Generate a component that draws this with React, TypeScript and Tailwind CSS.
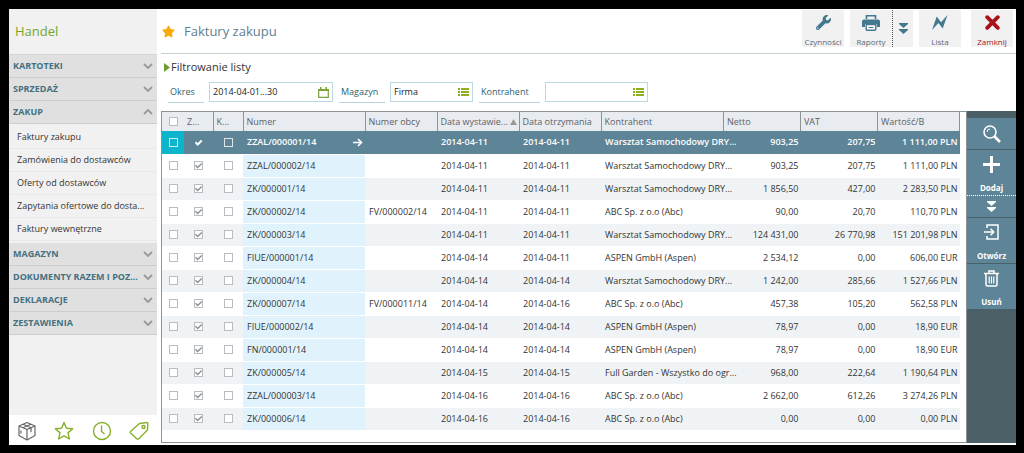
import { useState } from 'react'
import type { ReactNode } from 'react'
import clsx from 'clsx'
import { FaStar, FaWrench } from 'react-icons/fa'

interface Invoice {
  number: string
  foreign?: string
  issued: string
  received: string
  contractor: string
  net: string
  vat: string
  gross: string
}

const WORKSHOP = 'Warsztat Samochodowy DRY...'
const ABC = 'ABC Sp. z o.o (Abc)'
const ASPEN = 'ASPEN GmbH (Aspen)'

const invoices: Invoice[] = [
  { number: 'ZZAL/000001/14', issued: '2014-04-11', received: '2014-04-11', contractor: WORKSHOP, net: '903,25', vat: '207,75', gross: '1 111,00 PLN' },
  { number: 'ZZAL/000002/14', issued: '2014-04-11', received: '2014-04-11', contractor: WORKSHOP, net: '903,25', vat: '207,75', gross: '1 111,00 PLN' },
  { number: 'ZK/000001/14', issued: '2014-04-11', received: '2014-04-11', contractor: WORKSHOP, net: '1 856,50', vat: '427,00', gross: '2 283,50 PLN' },
  { number: 'ZK/000002/14', foreign: 'FV/000002/14', issued: '2014-04-11', received: '2014-04-11', contractor: ABC, net: '90,00', vat: '20,70', gross: '110,70 PLN' },
  { number: 'ZK/000003/14', issued: '2014-04-11', received: '2014-04-11', contractor: WORKSHOP, net: '124 431,00', vat: '26 770,98', gross: '151 201,98 PLN' },
  { number: 'FIUE/000001/14', issued: '2014-04-14', received: '2014-04-11', contractor: ASPEN, net: '2 534,12', vat: '0,00', gross: '606,00 EUR' },
  { number: 'ZK/000004/14', issued: '2014-04-14', received: '2014-04-14', contractor: WORKSHOP, net: '1 242,00', vat: '285,66', gross: '1 527,66 PLN' },
  { number: 'ZK/000007/14', foreign: 'FV/000011/14', issued: '2014-04-14', received: '2014-04-16', contractor: ABC, net: '457,38', vat: '105,20', gross: '562,58 PLN' },
  { number: 'FIUE/000002/14', issued: '2014-04-14', received: '2014-04-14', contractor: ASPEN, net: '78,97', vat: '0,00', gross: '18,90 EUR' },
  { number: 'FN/000001/14', issued: '2014-04-14', received: '2014-04-14', contractor: ASPEN, net: '78,97', vat: '0,00', gross: '18,90 EUR' },
  { number: 'ZK/000005/14', issued: '2014-04-15', received: '2014-04-15', contractor: 'Full Garden - Wszystko do ogr...', net: '968,00', vat: '222,64', gross: '1 190,64 PLN' },
  { number: 'ZZAL/000003/14', issued: '2014-04-16', received: '2014-04-16', contractor: ABC, net: '2 662,00', vat: '612,26', gross: '3 274,26 PLN' },
  { number: 'ZK/000006/14', issued: '2014-04-16', received: '2014-04-16', contractor: ABC, net: '0,00', vat: '0,00', gross: '0,00 PLN' },
]

const sections = [
  { title: 'KARTOTEKI' },
  { title: 'SPRZEDAŻ' },
  {
    title: 'ZAKUP',
    items: ['Faktury zakupu', 'Zamówienia do dostawców', 'Oferty od dostawców', 'Zapytania ofertowe do dosta...', 'Faktury wewnętrzne'],
  },
  { title: 'MAGAZYN' },
  { title: 'DOKUMENTY RAZEM I POZ...' },
  { title: 'DEKLARACJE' },
  { title: 'ZESTAWIENIA' },
]

function Chevron({ up }: { up?: boolean }) {
  return (
    <svg width="10" height="6" viewBox="0 0 10 6" fill="none" stroke="#999" strokeWidth="1.8" className="shrink-0">
      <path d={up ? 'M1 5l4-4 4 4' : 'M1 1l4 4 4-4'} />
    </svg>
  )
}

function DoubleArrow() {
  return (
    <svg width="9" height="11" viewBox="0 0 9 11" fill="currentColor">
      <path d="M0 0h9v1L4.500 5 0 1zM0 6h9v1L4.500 11 0 7z" />
    </svg>
  )
}

function ListIcon() {
  return (
    <svg width="11" height="8" viewBox="0 0 11 8" fill="#8fae1b" className="shrink-0">
      <path d="M0 0h2v2H0zM3 0h8v2H3zM0 3h2v2H0zM3 3h8v2H3zM0 6h2v2H0zM3 6h8v2H3z" />
    </svg>
  )
}

function CalendarIcon() {
  return (
    <svg width="11" height="11" viewBox="0 0 11 11" className="shrink-0">
      <path d="M.7 2.500h9.600v7.800H.7z" fill="none" stroke="#7da43a" strokeWidth="1.200" />
      <path d="M0 2h11v2H0zM2 0h1.500v2H2zM7.500 0H9v2H7.500z" fill="#7da43a" />
    </svg>
  )
}

function CheckBox({ label, checked, selected }: { label: string; checked?: boolean; selected?: boolean }) {
  return (
    <span className="grid place-items-center">
      <input
        type="checkbox"
        aria-label={label}
        defaultChecked={checked}
        className={clsx(
          'peer col-start-1 row-start-1 size-[9px] appearance-none border',
          selected ? 'border-white/80 checked:border-transparent' : 'border-[#b9bcc0] bg-white',
        )}
      />
      <svg
        viewBox="0 0 9 9"
        fill="none"
        strokeWidth={selected ? 2 : 1.4}
        className={clsx(
          'pointer-events-none invisible col-start-1 row-start-1 size-[9px] peer-checked:visible',
          selected ? 'stroke-white' : 'stroke-[#8c8f93]',
        )}
      >
        <path d="M1.500 4.300l2.200 2.200 4-4" />
      </svg>
    </span>
  )
}

function Filter({ id, label, value, labelClass, boxClass, icon }: {
  id: string
  label: string
  value?: string
  labelClass: string
  boxClass: string
  icon: ReactNode
}) {
  return (
    <div className="flex gap-[5px]">
      <label htmlFor={id} className={clsx('border-b border-[#b9d3dc] px-0.5 leading-5 text-[#2d6270]', labelClass)}>
        {label}
      </label>
      <div className={clsx('flex h-5 items-center border border-[#bcd8e2] px-[3px]', boxClass)}>
        <input id={id} defaultValue={value} className="w-full min-w-0 bg-transparent text-[#222] outline-none" />
        {icon}
      </div>
    </div>
  )
}

function TopButton({ label, danger, children }: { label: string; danger?: boolean; children: ReactNode }) {
  return (
    <button
      type="button"
      className={clsx(
        'flex h-[37px] w-[42px] flex-col items-center justify-between bg-[#f1f1f1] pt-1 text-[8px] leading-[10px]',
        danger ? 'text-[#a8121b]' : 'text-[#5b6b73]',
      )}
    >
      <span className={clsx('grid h-[18px] place-items-center', danger ? 'text-[#a8121b]' : 'text-[#44788f]')}>{children}</span>
      {label}
    </button>
  )
}

function SideButton({ label, children }: { label: string; children: ReactNode }) {
  return (
    <button
      type="button"
      className="flex h-[45px] w-full flex-col items-center justify-between bg-[#5e8498] pt-1.5 pb-0.5 text-[8px] leading-[10px] font-bold text-white"
    >
      {children}
      {label}
    </button>
  )
}

function Sidebar() {
  return (
    <aside className="flex w-[148px] shrink-0 flex-col bg-[#f1f1f1]">
      <h2 className="h-[46px] border-b border-[#d5d5d5] px-1.5 text-[13px] leading-[45px] text-[#76a52b]">Handel</h2>
      <nav>
        {sections.map(section => (
          <div key={section.title}>
            <button
              type="button"
              className="flex h-[23px] w-full items-center justify-between border-b border-[#cdcdcd] bg-[#e0e0e0] pr-1 pl-1 text-[9px] font-bold text-[#44707f]"
            >
              {section.title}
              <Chevron up={!!section.items} />
            </button>
            {section.items && (
              <ul className="py-0.5">
                {section.items.map(item => (
                  <li key={item} className="h-[23px] border-b border-[#e8e8e8] px-2 text-[9px] leading-[22px]">
                    <a href="#" className="text-[#333]">{item}</a>
                  </li>
                ))}
              </ul>
            )}
          </div>
        ))}
      </nav>
      <div className="mt-auto flex h-[30px] items-center justify-between bg-white px-2 pt-0.5 text-[#86b02c]">
        <button type="button" aria-label="Moduły" className="text-[#666]">
          <svg width="20" height="20" viewBox="0 0 20 20" fill="none" stroke="currentColor" strokeWidth="1.200" strokeLinejoin="round">
            <path d="M10 1.500l8 3.500v9.500L10 19l-8-4.500V5zM2 5l8 3.500L18 5M10 8.500V19M6 3.200l8 3.600v4.500M14 3.200L6 6.800M4 12.500v-3" />
          </svg>
        </button>
        <button type="button" aria-label="Ulubione">
          <svg width="20" height="20" viewBox="0 0 20 20" fill="none" stroke="currentColor" strokeWidth="1.400" strokeLinejoin="round">
            <path d="M10 1.500l2.500 5.700 6.200.6-4.700 4.100 1.400 6.100L10 14.800 4.600 18l1.400-6.100-4.700-4.100 6.200-.6z" />
          </svg>
        </button>
        <button type="button" aria-label="Historia">
          <svg width="20" height="20" viewBox="0 0 20 20" fill="none" stroke="currentColor" strokeWidth="1.400">
            <circle cx="10" cy="10" r="8.500" />
            <path d="M9.500 4.500v6l3 2.500" />
          </svg>
        </button>
        <button type="button" aria-label="Etykiety">
          <svg width="20" height="20" viewBox="0 0 20 20" fill="none" stroke="currentColor" strokeWidth="1.400" strokeLinejoin="round">
            <path d="M10.500 2.500L18 1.500q.8 0 .8.800L18.500 9 9.500 18q-.7.600-1.400 0L1.500 12q-.5-.7 0-1.400z" />
            <circle cx="14.500" cy="6" r="1.500" />
          </svg>
        </button>
      </div>
    </aside>
  )
}

function InvoiceTable({ selected, onSelect }: { selected: number; onSelect: (index: number) => void }) {
  return (
    <table className="w-full table-fixed border-collapse text-[9px] leading-3 text-[#333]">
      <colgroup>
        <col className="w-[22px]" />
        <col className="w-[29px]" />
        <col className="w-[30px]" />
        <col className="w-[122px]" />
        <col className="w-[72px]" />
        <col className="w-[82px]" />
        <col className="w-[82px]" />
        <col />
        <col className="w-[77px]" />
        <col className="w-[77px]" />
        <col className="w-[82px]" />
      </colgroup>
      <thead>
        <tr className="h-[19px] bg-[#e8ebf0] text-left whitespace-nowrap text-[#5d6166] *:border-r *:border-[#8d9299] *:p-0 *:pl-[3px] *:font-normal">
          <th className="border-r-0! pl-0!"><CheckBox label="Zaznacz wszystkie" /></th>
          <th>Z...</th>
          <th>K...</th>
          <th>Numer</th>
          <th>Numer obcy</th>
          <th>
            <span className="flex items-center justify-between pr-0.5">
              Data wystawie...
              <svg width="7" height="6" viewBox="0 0 7 6" fill="#999" className="shrink-0"><path d="M3.500 0L7 6H0z" /></svg>
            </span>
          </th>
          <th>Data otrzymania</th>
          <th>Kontrahent</th>
          <th>Netto</th>
          <th>VAT</th>
          <th>Wartość/B</th>
        </tr>
      </thead>
      <tbody>
        {invoices.map((row, i) => {
          const active = i === selected
          return (
            <tr
              key={row.number}
              onClick={() => onSelect(i)}
              className={clsx(
                'h-[23px] border-b border-white whitespace-nowrap *:p-0',
                active ? 'bg-[#5e8498] font-semibold text-white' : 'even:bg-white odd:bg-[#eff3f6]',
              )}
            >
              <td className={clsx(active && 'bg-[#0cb5cb]')}><CheckBox label={`Zaznacz ${row.number}`} selected={active} /></td>
              <td><CheckBox label="Zatwierdzony" checked selected={active} /></td>
              <td><CheckBox label="Księgowany" selected={active} /></td>
              <td className={clsx('pl-1!', !active && 'bg-[#e0f3fc]')}>
                <span className="flex items-center justify-between pr-0.5">
                  {row.number}
                  {active && (
                    <svg width="10" height="9" viewBox="0 0 10 9" fill="none" stroke="currentColor" strokeWidth="1.600">
                      <path d="M0 4.500h8.500M5 1l3.500 3.500L5 8" />
                    </svg>
                  )}
                </span>
              </td>
              <td className="pl-1!">{row.foreign}</td>
              <td className="pl-1!">{row.issued}</td>
              <td className="pl-1!">{row.received}</td>
              <td className="pl-1!">{row.contractor}</td>
              <td className="pr-0.5! text-right">{row.net}</td>
              <td className="pr-0.5! text-right">{row.vat}</td>
              <td className="pr-0.5! text-right">{row.gross}</td>
            </tr>
          )
        })}
      </tbody>
    </table>
  )
}

export default function App() {
  const [selected, setSelected] = useState(0)

  return (
    <div className="flex h-screen bg-black pt-[9px] pr-2 pb-2 pl-[9px] font-['Open_Sans',sans-serif] text-[9px]">
      <div className="flex min-w-0 flex-1 gap-1 bg-white">
        <Sidebar />

        <main className="flex min-w-0 flex-1 flex-col">
          <header className="flex h-[45px] shrink-0 items-center border-b border-[#c3d0d5] pr-[3px] pl-px">
            <FaStar size={13} className="text-[#f9ab0c]" />
            <h1 className="pt-px pl-[9px] text-[13px] text-[#5f7d90]">Faktury zakupu</h1>
            <div className="mb-1.5 ml-auto flex gap-1.5">
              <TopButton label="Czynności"><FaWrench size={15} /></TopButton>
              <div className="flex">
                <TopButton label="Raporty">
                  <svg width="18" height="16" viewBox="0 0 18 16" fill="currentColor">
                    <path d="M4.500 4V.8h9V4" fill="none" stroke="currentColor" strokeWidth="1.600" />
                    <path d="M2 4.500h14a2 2 0 012 2V12h-3V9H3v3H0V6.500a2 2 0 012-2z" />
                    <path d="M4.200 9.500h9.600v4.800a1 1 0 01-1 1H5.200a1 1 0 01-1-1z" fill="#fff" stroke="currentColor" strokeWidth="1.400" />
                    <path d="M6.500 12h5v1h-5z" />
                  </svg>
                </TopButton>
                <button type="button" aria-label="Więcej raportów" className="grid w-[21px] place-items-center border-l border-dotted border-[#555] bg-[#f1f1f1] text-[#44788f]">
                  <DoubleArrow />
                </button>
              </div>
              <TopButton label="Lista">
                <svg width="16" height="15" viewBox="0 0 16 15" fill="currentColor">
                  <path d="M0 15L4.700 1.500l4.300 5.800L15.500 0l-4.800 13.500-4.200-5.500z" />
                </svg>
              </TopButton>
              <div className="ml-1">
                <TopButton label="Zamknij" danger>
                  <svg width="15" height="15" viewBox="0 0 15 15" stroke="currentColor" strokeWidth="3.800" strokeLinecap="round">
                    <path d="M2.200 2.200l10.600 10.600M12.800 2.200L2.200 12.800" />
                  </svg>
                </TopButton>
              </div>
            </div>
          </header>

          <section className="flex h-[57px] shrink-0 flex-col justify-between pt-[5px] pb-2">
            <h3 className="flex items-center gap-px pl-[3px] text-[11px] leading-4 text-[#333]">
              <svg width="6" height="9" viewBox="0 0 6 9" fill="#6b9e2e"><path d="M0 0l6 4.500L0 9z" /></svg>
              Filtrowanie listy
            </h3>
            <div className="flex gap-1.5 pl-[7px]">
              <Filter id="okres" label="Okres" value="2014-04-01...30" labelClass="w-9" boxClass="w-[124px]" icon={<CalendarIcon />} />
              <Filter id="magazyn" label="Magazyn" value="Firma" labelClass="w-[46px]" boxClass="w-[83px]" icon={<ListIcon />} />
              <Filter id="kontrahent" label="Kontrahent" labelClass="w-[61px]" boxClass="w-[103px]" icon={<ListIcon />} />
            </div>
          </section>

          <div className="mb-0.5 flex min-h-0 flex-1">
            <div className="min-w-0 flex-1 border border-[#8d9299] pr-1.5">
              <InvoiceTable selected={selected} onSelect={setSelected} />
            </div>
            <div className="flex w-[49px] flex-col gap-px bg-[#4a5f66] pt-[7px]">
              <button type="button" aria-label="Szukaj" className="grid h-[31px] w-full place-items-center bg-[#5e8498] text-white">
                <svg width="18" height="18" viewBox="0 0 18 18" fill="none" stroke="currentColor">
                  <circle cx="7" cy="7" r="6" strokeWidth="1.600" />
                  <path d="M4 7a3 3 0 013-3" strokeWidth="1" />
                  <path d="M11.500 11.500l5.500 5.500" strokeWidth="2.600" />
                </svg>
              </button>
              <div>
                <SideButton label="Dodaj">
                  <svg width="17" height="17" viewBox="0 0 17 17" stroke="currentColor" strokeWidth="3"><path d="M8.500 0v17M0 8.500h17" /></svg>
                </SideButton>
                <button type="button" aria-label="Więcej opcji" className="grid h-[22px] w-full place-items-center border-t border-dotted border-white bg-[#5e8498] text-white">
                  <DoubleArrow />
                </button>
              </div>
              <SideButton label="Otwórz">
                <svg width="15" height="16" viewBox="0 0 15 16" fill="none" stroke="currentColor" strokeWidth="1.500">
                  <path d="M3 4V1h11v14H3v-3M0 8h9.500M6.500 4.800L9.700 8l-3.200 3.200" />
                </svg>
              </SideButton>
              <SideButton label="Usuń">
                <svg width="15" height="17" viewBox="0 0 15 17" fill="none" stroke="currentColor" strokeWidth="1.500">
                  <path d="M0 3.500h15M5 3V1h5v2M2 4v10.500a1.500 1.500 0 001.500 1.500h8a1.500 1.500 0 001.500-1.500V4" />
                  <path d="M5.200 6.500v7M7.500 6.500v7M9.800 6.500v7" strokeWidth="1.200" />
                </svg>
              </SideButton>
            </div>
          </div>
        </main>
      </div>
    </div>
  )
}
